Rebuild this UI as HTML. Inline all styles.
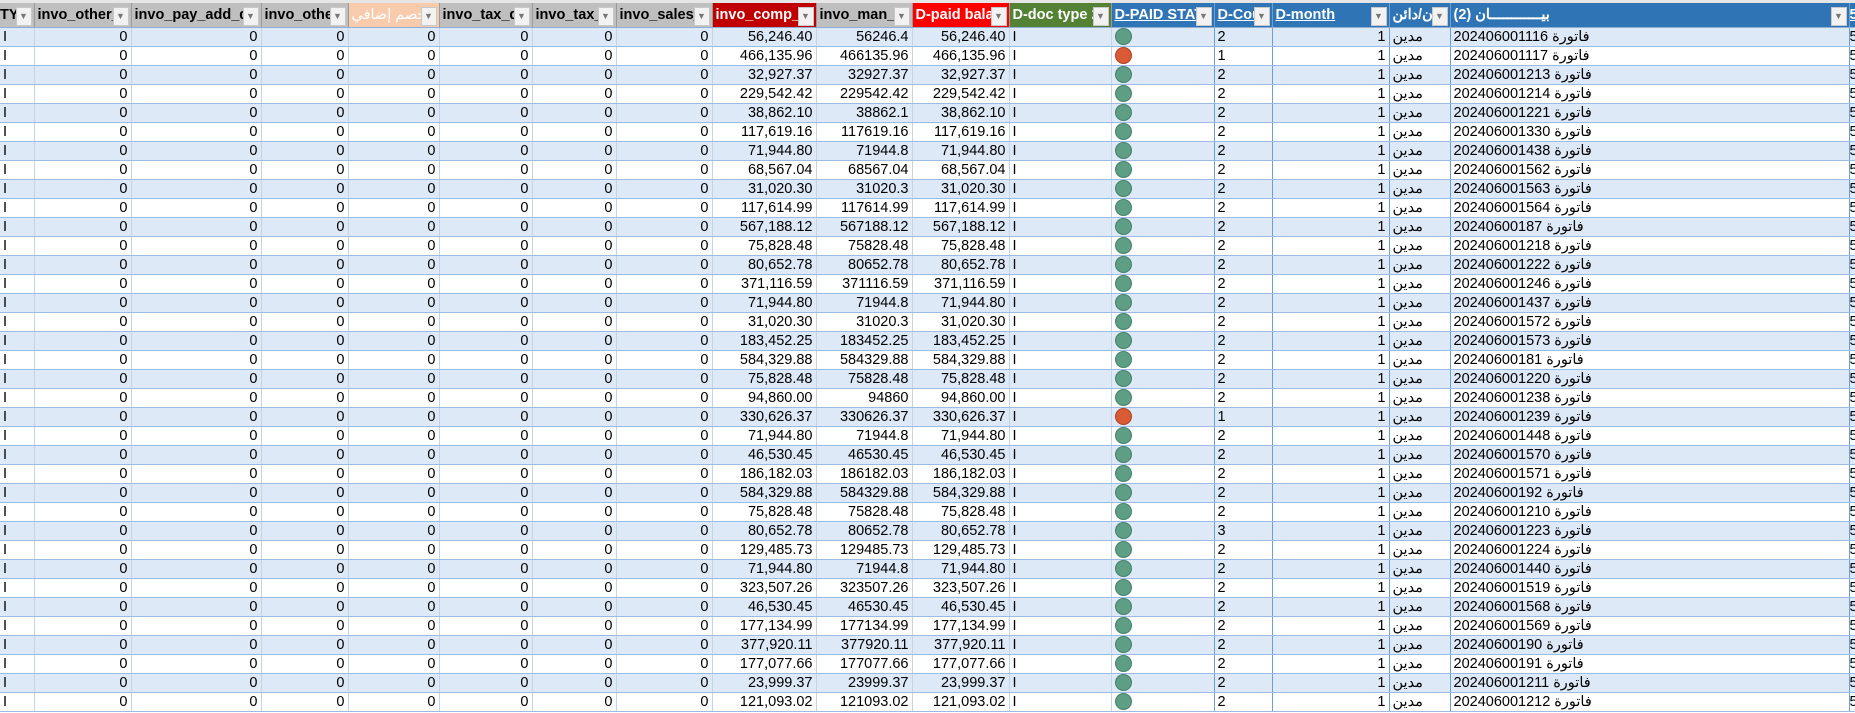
<!DOCTYPE html>
<html><head><meta charset="utf-8"><style>
body{margin:0;width:1855px;height:713px;overflow:hidden;background:#fff;font-family:"Liberation Sans Narrow","Liberation Sans","Noto Sans CJK SC",sans-serif;}
.top{position:absolute;left:0;top:0;width:1855px;height:3px;background:#e6e6e6;}
table{position:absolute;left:0;top:3px;border-collapse:collapse;table-layout:fixed;width:1855px;}
td,th{height:18px;padding:0 3px;font-size:14.5px;white-space:nowrap;overflow:hidden;border-right:1px solid #c6d3e3;border-bottom:1px solid #9bbbe0;line-height:18px;}
th{height:24px;background:#bfbfbf;font-weight:bold;text-align:left;position:relative;border-right:1px solid #9a9a9a;border-bottom:1px solid #8eaed6;padding-right:20px;}
th .f{position:absolute;right:2px;top:4px;width:14px;height:17px;background:#f2f2f2;border:1px solid #c8c8c8;color:#777;font-size:9px;line-height:17px;text-align:center;font-weight:normal;}
th.pk{background:#f8cbad;color:#fff;font-weight:normal;}
th.dr{background:#c00000;color:#fff}
th.rd{background:#ff0000;color:#fff}
th.gr{background:#548235;color:#fff}
th.bl{background:#2f75b5;color:#fff;text-decoration:underline;border-right:1px solid #6d9fd3}
tr:nth-child(even) td{background:#dde9f7}
td.r{text-align:right}
td.b{border-right:1px solid #6d9fd3}
.c{display:inline-block;width:15px;height:15px;border-radius:50%;background:#5e9e85;border:1px solid #44806a;vertical-align:middle;margin-top:-2px}
.c.x{background:#d95a35;border-color:#b0421f}
.n,.a{display:inline-block}
.a{margin-left:4px}
</style></head><body><div class="top"></div>
<table>
<colgroup><col style="width:34px"><col style="width:97px"><col style="width:130px"><col style="width:87px"><col style="width:91px"><col style="width:93px"><col style="width:84px"><col style="width:96px"><col style="width:104px"><col style="width:96px"><col style="width:97px"><col style="width:102px"><col style="width:103px"><col style="width:58px"><col style="width:117px"><col style="width:61px"><col style="width:399px"><col style="width:6px"></colgroup>
<tr><th style="padding-left:0">TY<span class="f">▼</span></th><th>invo_other_<span class="f">▼</span></th><th>invo_pay_add_di<span class="f">▼</span></th><th>invo_othe<span class="f">▼</span></th><th class="pk"><span style="display:inline-block">خصم إضافي</span><span class="f">▼</span></th><th>invo_tax_di<span class="f">▼</span></th><th>invo_tax_<span class="f">▼</span></th><th>invo_sales_<span class="f">▼</span></th><th class="dr">invo_comp_r<span class="f">▼</span></th><th>invo_man_r<span class="f">▼</span></th><th class="rd">D-paid bala<span class="f">▼</span></th><th class="gr">D-doc type 2<span class="f">▼</span></th><th class="bl">D-PAID STAT<span class="f">▼</span></th><th class="bl">D-Cou<span class="f">▼</span></th><th class="bl">D-month<span class="f">▼</span></th><th class="bl"><span style="display:inline-block">ن/دائن</span><span class="f">▼</span></th><th class="bl"><span style="display:inline-block">بيــــــــــــان (2)</span><span class="f">▼</span></th><th class="bl" style="padding:0">5</th></tr>
<tr><td>I</td><td class="r">0</td><td class="r">0</td><td class="r">0</td><td class="r">0</td><td class="r">0</td><td class="r">0</td><td class="r">0</td><td class="r">56,246.40</td><td class="r">56246.4</td><td class="r">56,246.40</td><td>I</td><td class="b"><span class="c"></span></td><td class="b">2</td><td class="r b">1</td><td class="b">مدين</td><td class="b"><span class="n">202406001116</span><span class="a">فاتورة</span></td><td style="padding:0">5</td></tr>
<tr><td>I</td><td class="r">0</td><td class="r">0</td><td class="r">0</td><td class="r">0</td><td class="r">0</td><td class="r">0</td><td class="r">0</td><td class="r">466,135.96</td><td class="r">466135.96</td><td class="r">466,135.96</td><td>I</td><td class="b"><span class="c x"></span></td><td class="b">1</td><td class="r b">1</td><td class="b">مدين</td><td class="b"><span class="n">202406001117</span><span class="a">فاتورة</span></td><td style="padding:0">5</td></tr>
<tr><td>I</td><td class="r">0</td><td class="r">0</td><td class="r">0</td><td class="r">0</td><td class="r">0</td><td class="r">0</td><td class="r">0</td><td class="r">32,927.37</td><td class="r">32927.37</td><td class="r">32,927.37</td><td>I</td><td class="b"><span class="c"></span></td><td class="b">2</td><td class="r b">1</td><td class="b">مدين</td><td class="b"><span class="n">202406001213</span><span class="a">فاتورة</span></td><td style="padding:0">5</td></tr>
<tr><td>I</td><td class="r">0</td><td class="r">0</td><td class="r">0</td><td class="r">0</td><td class="r">0</td><td class="r">0</td><td class="r">0</td><td class="r">229,542.42</td><td class="r">229542.42</td><td class="r">229,542.42</td><td>I</td><td class="b"><span class="c"></span></td><td class="b">2</td><td class="r b">1</td><td class="b">مدين</td><td class="b"><span class="n">202406001214</span><span class="a">فاتورة</span></td><td style="padding:0">5</td></tr>
<tr><td>I</td><td class="r">0</td><td class="r">0</td><td class="r">0</td><td class="r">0</td><td class="r">0</td><td class="r">0</td><td class="r">0</td><td class="r">38,862.10</td><td class="r">38862.1</td><td class="r">38,862.10</td><td>I</td><td class="b"><span class="c"></span></td><td class="b">2</td><td class="r b">1</td><td class="b">مدين</td><td class="b"><span class="n">202406001221</span><span class="a">فاتورة</span></td><td style="padding:0">5</td></tr>
<tr><td>I</td><td class="r">0</td><td class="r">0</td><td class="r">0</td><td class="r">0</td><td class="r">0</td><td class="r">0</td><td class="r">0</td><td class="r">117,619.16</td><td class="r">117619.16</td><td class="r">117,619.16</td><td>I</td><td class="b"><span class="c"></span></td><td class="b">2</td><td class="r b">1</td><td class="b">مدين</td><td class="b"><span class="n">202406001330</span><span class="a">فاتورة</span></td><td style="padding:0">5</td></tr>
<tr><td>I</td><td class="r">0</td><td class="r">0</td><td class="r">0</td><td class="r">0</td><td class="r">0</td><td class="r">0</td><td class="r">0</td><td class="r">71,944.80</td><td class="r">71944.8</td><td class="r">71,944.80</td><td>I</td><td class="b"><span class="c"></span></td><td class="b">2</td><td class="r b">1</td><td class="b">مدين</td><td class="b"><span class="n">202406001438</span><span class="a">فاتورة</span></td><td style="padding:0">5</td></tr>
<tr><td>I</td><td class="r">0</td><td class="r">0</td><td class="r">0</td><td class="r">0</td><td class="r">0</td><td class="r">0</td><td class="r">0</td><td class="r">68,567.04</td><td class="r">68567.04</td><td class="r">68,567.04</td><td>I</td><td class="b"><span class="c"></span></td><td class="b">2</td><td class="r b">1</td><td class="b">مدين</td><td class="b"><span class="n">202406001562</span><span class="a">فاتورة</span></td><td style="padding:0">5</td></tr>
<tr><td>I</td><td class="r">0</td><td class="r">0</td><td class="r">0</td><td class="r">0</td><td class="r">0</td><td class="r">0</td><td class="r">0</td><td class="r">31,020.30</td><td class="r">31020.3</td><td class="r">31,020.30</td><td>I</td><td class="b"><span class="c"></span></td><td class="b">2</td><td class="r b">1</td><td class="b">مدين</td><td class="b"><span class="n">202406001563</span><span class="a">فاتورة</span></td><td style="padding:0">5</td></tr>
<tr><td>I</td><td class="r">0</td><td class="r">0</td><td class="r">0</td><td class="r">0</td><td class="r">0</td><td class="r">0</td><td class="r">0</td><td class="r">117,614.99</td><td class="r">117614.99</td><td class="r">117,614.99</td><td>I</td><td class="b"><span class="c"></span></td><td class="b">2</td><td class="r b">1</td><td class="b">مدين</td><td class="b"><span class="n">202406001564</span><span class="a">فاتورة</span></td><td style="padding:0">5</td></tr>
<tr><td>I</td><td class="r">0</td><td class="r">0</td><td class="r">0</td><td class="r">0</td><td class="r">0</td><td class="r">0</td><td class="r">0</td><td class="r">567,188.12</td><td class="r">567188.12</td><td class="r">567,188.12</td><td>I</td><td class="b"><span class="c"></span></td><td class="b">2</td><td class="r b">1</td><td class="b">مدين</td><td class="b"><span class="n">20240600187</span><span class="a">فاتورة</span></td><td style="padding:0">5</td></tr>
<tr><td>I</td><td class="r">0</td><td class="r">0</td><td class="r">0</td><td class="r">0</td><td class="r">0</td><td class="r">0</td><td class="r">0</td><td class="r">75,828.48</td><td class="r">75828.48</td><td class="r">75,828.48</td><td>I</td><td class="b"><span class="c"></span></td><td class="b">2</td><td class="r b">1</td><td class="b">مدين</td><td class="b"><span class="n">202406001218</span><span class="a">فاتورة</span></td><td style="padding:0">5</td></tr>
<tr><td>I</td><td class="r">0</td><td class="r">0</td><td class="r">0</td><td class="r">0</td><td class="r">0</td><td class="r">0</td><td class="r">0</td><td class="r">80,652.78</td><td class="r">80652.78</td><td class="r">80,652.78</td><td>I</td><td class="b"><span class="c"></span></td><td class="b">2</td><td class="r b">1</td><td class="b">مدين</td><td class="b"><span class="n">202406001222</span><span class="a">فاتورة</span></td><td style="padding:0">5</td></tr>
<tr><td>I</td><td class="r">0</td><td class="r">0</td><td class="r">0</td><td class="r">0</td><td class="r">0</td><td class="r">0</td><td class="r">0</td><td class="r">371,116.59</td><td class="r">371116.59</td><td class="r">371,116.59</td><td>I</td><td class="b"><span class="c"></span></td><td class="b">2</td><td class="r b">1</td><td class="b">مدين</td><td class="b"><span class="n">202406001246</span><span class="a">فاتورة</span></td><td style="padding:0">5</td></tr>
<tr><td>I</td><td class="r">0</td><td class="r">0</td><td class="r">0</td><td class="r">0</td><td class="r">0</td><td class="r">0</td><td class="r">0</td><td class="r">71,944.80</td><td class="r">71944.8</td><td class="r">71,944.80</td><td>I</td><td class="b"><span class="c"></span></td><td class="b">2</td><td class="r b">1</td><td class="b">مدين</td><td class="b"><span class="n">202406001437</span><span class="a">فاتورة</span></td><td style="padding:0">5</td></tr>
<tr><td>I</td><td class="r">0</td><td class="r">0</td><td class="r">0</td><td class="r">0</td><td class="r">0</td><td class="r">0</td><td class="r">0</td><td class="r">31,020.30</td><td class="r">31020.3</td><td class="r">31,020.30</td><td>I</td><td class="b"><span class="c"></span></td><td class="b">2</td><td class="r b">1</td><td class="b">مدين</td><td class="b"><span class="n">202406001572</span><span class="a">فاتورة</span></td><td style="padding:0">5</td></tr>
<tr><td>I</td><td class="r">0</td><td class="r">0</td><td class="r">0</td><td class="r">0</td><td class="r">0</td><td class="r">0</td><td class="r">0</td><td class="r">183,452.25</td><td class="r">183452.25</td><td class="r">183,452.25</td><td>I</td><td class="b"><span class="c"></span></td><td class="b">2</td><td class="r b">1</td><td class="b">مدين</td><td class="b"><span class="n">202406001573</span><span class="a">فاتورة</span></td><td style="padding:0">5</td></tr>
<tr><td>I</td><td class="r">0</td><td class="r">0</td><td class="r">0</td><td class="r">0</td><td class="r">0</td><td class="r">0</td><td class="r">0</td><td class="r">584,329.88</td><td class="r">584329.88</td><td class="r">584,329.88</td><td>I</td><td class="b"><span class="c"></span></td><td class="b">2</td><td class="r b">1</td><td class="b">مدين</td><td class="b"><span class="n">20240600181</span><span class="a">فاتورة</span></td><td style="padding:0">5</td></tr>
<tr><td>I</td><td class="r">0</td><td class="r">0</td><td class="r">0</td><td class="r">0</td><td class="r">0</td><td class="r">0</td><td class="r">0</td><td class="r">75,828.48</td><td class="r">75828.48</td><td class="r">75,828.48</td><td>I</td><td class="b"><span class="c"></span></td><td class="b">2</td><td class="r b">1</td><td class="b">مدين</td><td class="b"><span class="n">202406001220</span><span class="a">فاتورة</span></td><td style="padding:0">5</td></tr>
<tr><td>I</td><td class="r">0</td><td class="r">0</td><td class="r">0</td><td class="r">0</td><td class="r">0</td><td class="r">0</td><td class="r">0</td><td class="r">94,860.00</td><td class="r">94860</td><td class="r">94,860.00</td><td>I</td><td class="b"><span class="c"></span></td><td class="b">2</td><td class="r b">1</td><td class="b">مدين</td><td class="b"><span class="n">202406001238</span><span class="a">فاتورة</span></td><td style="padding:0">5</td></tr>
<tr><td>I</td><td class="r">0</td><td class="r">0</td><td class="r">0</td><td class="r">0</td><td class="r">0</td><td class="r">0</td><td class="r">0</td><td class="r">330,626.37</td><td class="r">330626.37</td><td class="r">330,626.37</td><td>I</td><td class="b"><span class="c x"></span></td><td class="b">1</td><td class="r b">1</td><td class="b">مدين</td><td class="b"><span class="n">202406001239</span><span class="a">فاتورة</span></td><td style="padding:0">5</td></tr>
<tr><td>I</td><td class="r">0</td><td class="r">0</td><td class="r">0</td><td class="r">0</td><td class="r">0</td><td class="r">0</td><td class="r">0</td><td class="r">71,944.80</td><td class="r">71944.8</td><td class="r">71,944.80</td><td>I</td><td class="b"><span class="c"></span></td><td class="b">2</td><td class="r b">1</td><td class="b">مدين</td><td class="b"><span class="n">202406001448</span><span class="a">فاتورة</span></td><td style="padding:0">5</td></tr>
<tr><td>I</td><td class="r">0</td><td class="r">0</td><td class="r">0</td><td class="r">0</td><td class="r">0</td><td class="r">0</td><td class="r">0</td><td class="r">46,530.45</td><td class="r">46530.45</td><td class="r">46,530.45</td><td>I</td><td class="b"><span class="c"></span></td><td class="b">2</td><td class="r b">1</td><td class="b">مدين</td><td class="b"><span class="n">202406001570</span><span class="a">فاتورة</span></td><td style="padding:0">5</td></tr>
<tr><td>I</td><td class="r">0</td><td class="r">0</td><td class="r">0</td><td class="r">0</td><td class="r">0</td><td class="r">0</td><td class="r">0</td><td class="r">186,182.03</td><td class="r">186182.03</td><td class="r">186,182.03</td><td>I</td><td class="b"><span class="c"></span></td><td class="b">2</td><td class="r b">1</td><td class="b">مدين</td><td class="b"><span class="n">202406001571</span><span class="a">فاتورة</span></td><td style="padding:0">5</td></tr>
<tr><td>I</td><td class="r">0</td><td class="r">0</td><td class="r">0</td><td class="r">0</td><td class="r">0</td><td class="r">0</td><td class="r">0</td><td class="r">584,329.88</td><td class="r">584329.88</td><td class="r">584,329.88</td><td>I</td><td class="b"><span class="c"></span></td><td class="b">2</td><td class="r b">1</td><td class="b">مدين</td><td class="b"><span class="n">20240600192</span><span class="a">فاتورة</span></td><td style="padding:0">5</td></tr>
<tr><td>I</td><td class="r">0</td><td class="r">0</td><td class="r">0</td><td class="r">0</td><td class="r">0</td><td class="r">0</td><td class="r">0</td><td class="r">75,828.48</td><td class="r">75828.48</td><td class="r">75,828.48</td><td>I</td><td class="b"><span class="c"></span></td><td class="b">2</td><td class="r b">1</td><td class="b">مدين</td><td class="b"><span class="n">202406001210</span><span class="a">فاتورة</span></td><td style="padding:0">5</td></tr>
<tr><td>I</td><td class="r">0</td><td class="r">0</td><td class="r">0</td><td class="r">0</td><td class="r">0</td><td class="r">0</td><td class="r">0</td><td class="r">80,652.78</td><td class="r">80652.78</td><td class="r">80,652.78</td><td>I</td><td class="b"><span class="c"></span></td><td class="b">3</td><td class="r b">1</td><td class="b">مدين</td><td class="b"><span class="n">202406001223</span><span class="a">فاتورة</span></td><td style="padding:0">5</td></tr>
<tr><td>I</td><td class="r">0</td><td class="r">0</td><td class="r">0</td><td class="r">0</td><td class="r">0</td><td class="r">0</td><td class="r">0</td><td class="r">129,485.73</td><td class="r">129485.73</td><td class="r">129,485.73</td><td>I</td><td class="b"><span class="c"></span></td><td class="b">2</td><td class="r b">1</td><td class="b">مدين</td><td class="b"><span class="n">202406001224</span><span class="a">فاتورة</span></td><td style="padding:0">5</td></tr>
<tr><td>I</td><td class="r">0</td><td class="r">0</td><td class="r">0</td><td class="r">0</td><td class="r">0</td><td class="r">0</td><td class="r">0</td><td class="r">71,944.80</td><td class="r">71944.8</td><td class="r">71,944.80</td><td>I</td><td class="b"><span class="c"></span></td><td class="b">2</td><td class="r b">1</td><td class="b">مدين</td><td class="b"><span class="n">202406001440</span><span class="a">فاتورة</span></td><td style="padding:0">5</td></tr>
<tr><td>I</td><td class="r">0</td><td class="r">0</td><td class="r">0</td><td class="r">0</td><td class="r">0</td><td class="r">0</td><td class="r">0</td><td class="r">323,507.26</td><td class="r">323507.26</td><td class="r">323,507.26</td><td>I</td><td class="b"><span class="c"></span></td><td class="b">2</td><td class="r b">1</td><td class="b">مدين</td><td class="b"><span class="n">202406001519</span><span class="a">فاتورة</span></td><td style="padding:0">5</td></tr>
<tr><td>I</td><td class="r">0</td><td class="r">0</td><td class="r">0</td><td class="r">0</td><td class="r">0</td><td class="r">0</td><td class="r">0</td><td class="r">46,530.45</td><td class="r">46530.45</td><td class="r">46,530.45</td><td>I</td><td class="b"><span class="c"></span></td><td class="b">2</td><td class="r b">1</td><td class="b">مدين</td><td class="b"><span class="n">202406001568</span><span class="a">فاتورة</span></td><td style="padding:0">5</td></tr>
<tr><td>I</td><td class="r">0</td><td class="r">0</td><td class="r">0</td><td class="r">0</td><td class="r">0</td><td class="r">0</td><td class="r">0</td><td class="r">177,134.99</td><td class="r">177134.99</td><td class="r">177,134.99</td><td>I</td><td class="b"><span class="c"></span></td><td class="b">2</td><td class="r b">1</td><td class="b">مدين</td><td class="b"><span class="n">202406001569</span><span class="a">فاتورة</span></td><td style="padding:0">5</td></tr>
<tr><td>I</td><td class="r">0</td><td class="r">0</td><td class="r">0</td><td class="r">0</td><td class="r">0</td><td class="r">0</td><td class="r">0</td><td class="r">377,920.11</td><td class="r">377920.11</td><td class="r">377,920.11</td><td>I</td><td class="b"><span class="c"></span></td><td class="b">2</td><td class="r b">1</td><td class="b">مدين</td><td class="b"><span class="n">20240600190</span><span class="a">فاتورة</span></td><td style="padding:0">5</td></tr>
<tr><td>I</td><td class="r">0</td><td class="r">0</td><td class="r">0</td><td class="r">0</td><td class="r">0</td><td class="r">0</td><td class="r">0</td><td class="r">177,077.66</td><td class="r">177077.66</td><td class="r">177,077.66</td><td>I</td><td class="b"><span class="c"></span></td><td class="b">2</td><td class="r b">1</td><td class="b">مدين</td><td class="b"><span class="n">20240600191</span><span class="a">فاتورة</span></td><td style="padding:0">5</td></tr>
<tr><td>I</td><td class="r">0</td><td class="r">0</td><td class="r">0</td><td class="r">0</td><td class="r">0</td><td class="r">0</td><td class="r">0</td><td class="r">23,999.37</td><td class="r">23999.37</td><td class="r">23,999.37</td><td>I</td><td class="b"><span class="c"></span></td><td class="b">2</td><td class="r b">1</td><td class="b">مدين</td><td class="b"><span class="n">202406001211</span><span class="a">فاتورة</span></td><td style="padding:0">5</td></tr>
<tr><td>I</td><td class="r">0</td><td class="r">0</td><td class="r">0</td><td class="r">0</td><td class="r">0</td><td class="r">0</td><td class="r">0</td><td class="r">121,093.02</td><td class="r">121093.02</td><td class="r">121,093.02</td><td>I</td><td class="b"><span class="c"></span></td><td class="b">2</td><td class="r b">1</td><td class="b">مدين</td><td class="b"><span class="n">202406001212</span><span class="a">فاتورة</span></td><td style="padding:0">5</td></tr>
</table>
</body></html>
